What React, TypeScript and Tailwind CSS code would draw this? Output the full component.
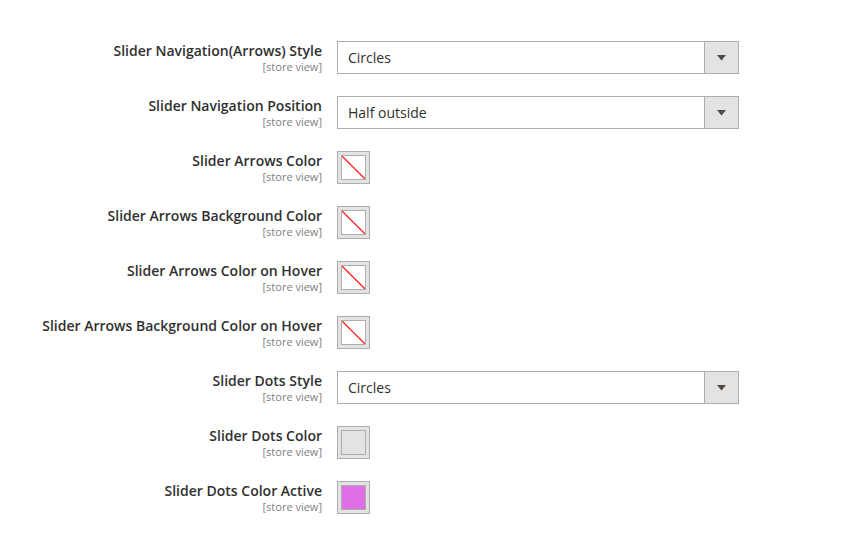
const rows: { label: string; type: "select" | "none" | "color"; value?: string; color?: string }[] = [
  { label: "Slider Navigation(Arrows) Style", type: "select", value: "Circles" },
  { label: "Slider Navigation Position", type: "select", value: "Half outside" },
  { label: "Slider Arrows Color", type: "none" },
  { label: "Slider Arrows Background Color", type: "none" },
  { label: "Slider Arrows Color on Hover", type: "none" },
  { label: "Slider Arrows Background Color on Hover", type: "none" },
  { label: "Slider Dots Style", type: "select", value: "Circles" },
  { label: "Slider Dots Color", type: "color", color: "#e3e3e3" },
  { label: "Slider Dots Color Active", type: "color", color: "#df6ee6" },
]

function SelectBox({ value }: { value: string }) {
  return (
    <div className="flex h-[33px] w-[402px] border border-[#adadad] bg-white">
      <div className="flex flex-1 items-center pl-[10px] text-[14px] text-[#303030]">{value}</div>
      <div className="flex w-[34px] items-center justify-center border-l border-[#adadad] bg-[#e3e3e3]">
        <svg width="9" height="6" viewBox="0 0 9 6">
          <path d="M0 0 H9 L4.5 5.5 Z" fill="#514943" />
        </svg>
      </div>
    </div>
  )
}

function Swatch({ color }: { color?: string }) {
  return (
    <div className="h-[33px] w-[33px] border border-[#adadad] bg-[#e3e3e3] p-[3px]">
      <div className="relative h-[25px] w-[25px] border border-[#adadad] bg-white" style={color ? { background: color } : undefined}>
        {!color && (
          <svg className="absolute left-0 top-0" width="23" height="23" viewBox="0 0 23 23">
            <path d="M0 0 L23 23" stroke="#ff2020" strokeWidth="1.3" fill="none" />
          </svg>
        )}
      </div>
    </div>
  )
}

export default function App() {
  return (
    <div className="h-[546px] w-[850px] bg-white pt-[41px]" style={{ fontFamily: '"Open Sans", sans-serif' }}>
      {rows.map((r) => (
        <div key={r.label} className="flex h-[55px] items-start">
          <div className="flex w-[322px] flex-col items-end pt-[1px] text-right">
            <span className="text-[14px] font-semibold leading-[18px] text-[#303030]">{r.label}</span>
            <span className="text-[11px] leading-[14px] text-[#808080]">[store view]</span>
          </div>
          <div className="ml-[15px]">
            {r.type === "select" ? <SelectBox value={r.value!} /> : <Swatch color={r.color} />}
          </div>
        </div>
      ))}
    </div>
  )
}
